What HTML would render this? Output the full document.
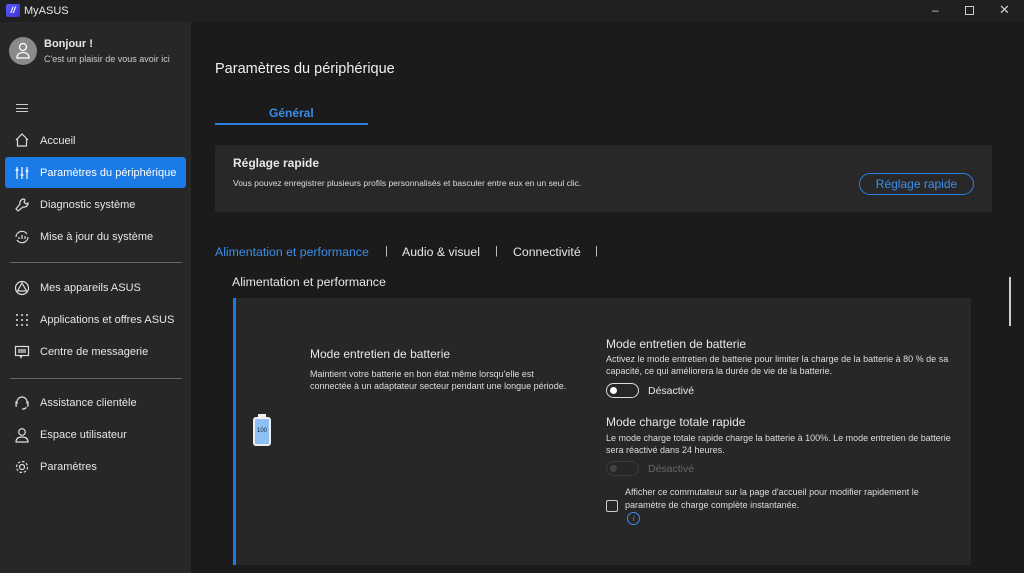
<!DOCTYPE html><html><head><meta charset="utf-8"><style>
*{margin:0;padding:0;box-sizing:border-box}
body{width:1024px;height:573px;background:#202020;font-family:"Liberation Sans",sans-serif;color:#e8e8e8;position:relative;overflow:hidden}
.a{position:absolute}
.side{left:0;top:0;width:191px;height:573px;background:#272727}
.main{left:191px;top:22px;width:833px;height:551px;background:#1b1b1b}
.nav{left:40px;font-size:11px;color:#e6e6e6}
.ic{left:14px;width:16px;height:16px}
.sep{left:10px;width:172px;height:1px;background:#666}
</style></head><body>
<div class="a side"></div>
<div class="a" style="left:0;top:0;width:1024px;height:22px;background:#202020"></div>
<div class="a" style="left:6px;top:4px;width:14px;height:13px;background:linear-gradient(135deg,#5b5bff,#3a2fd0);border-radius:2px;font-size:9px;color:#fff;font-style:italic;font-weight:bold;text-align:center;line-height:13px">//</div>
<div class="a" style="left:24px;top:5px;font-size:11px">MyASUS</div>
<div class="a" style="left:932px;top:3px;font-size:12px;color:#ccc">–</div>
<div class="a" style="left:965px;top:6px;width:9px;height:9px;border:1px solid #ccc"></div>
<div class="a" style="left:999px;top:2px;font-size:13px;color:#ccc">✕</div>
<div class="a main"></div>
<div class="a" style="left:9px;top:37px;width:28px;height:28px;border-radius:50%;background:#8a8a8a"></div>
<svg class="a" style="left:15px;top:42px" width="16" height="18" viewBox="0 0 16 18" fill="none" stroke="#fff" stroke-width="1.3"><circle cx="8" cy="5" r="3.5"/><path d="M2 16c0-4 3-5.5 6-5.5s6 1.5 6 5.5z"/></svg>
<div class="a" style="left:44px;top:38px;font-size:11px;font-weight:bold">Bonjour !</div>
<div class="a" style="left:44px;top:54px;font-size:9px;color:#ccc">C'est un plaisir de vous avoir ici</div>
<div class="a" style="left:16px;top:104px;width:12px;height:8px;border-top:1px solid #ccc;border-bottom:1px solid #ccc"></div>
<div class="a" style="left:16px;top:108px;width:12px;height:1px;background:#ccc"></div>
<svg class="a ic" style="top:132px" viewBox="0 0 16 16" fill="none" stroke="#ddd" stroke-width="1.2"><path d="M2 8L8 2l6 6M3.5 7v7h9V7"/></svg>
<div class="a nav" style="top:135px">Accueil</div>
<div class="a" style="left:5px;top:157px;width:181px;height:31px;background:#1a7ae6;border-radius:3px"></div>
<svg class="a ic" style="top:165px" viewBox="0 0 16 16" fill="none" stroke="#fff" stroke-width="1.2"><path d="M3 2v12M8 2v12M13 2v12M1.5 5h3M6.5 10h3M11.5 6h3"/></svg>
<div class="a nav" style="top:167px;color:#fff">Paramètres du périphérique</div>
<svg class="a ic" style="top:197px" viewBox="0 0 16 16" fill="none" stroke="#ddd" stroke-width="1.2"><path d="M10 2a4 4 0 0 0-4 5L2 12l2 2 5-4a4 4 0 0 0 5-4l-2 1-2-2 1-2z"/></svg>
<div class="a nav" style="top:199px">Diagnostic système</div>
<svg class="a ic" style="top:229px" viewBox="0 0 16 16" fill="none" stroke="#ddd" stroke-width="1.2"><path d="M2 8a6 6 0 0 1 11-3M14 8a6 6 0 0 1-11 3M5 10V8M8 10V6M11 10V7"/></svg>
<div class="a nav" style="top:231px">Mise à jour du système</div>
<div class="a sep" style="top:262px"></div>
<svg class="a ic" style="top:280px" viewBox="0 0 16 16" fill="none" stroke="#ddd" stroke-width="1.2"><circle cx="8" cy="8" r="6.5"/><path d="M8 3l4.5 8h-9z"/></svg>
<div class="a nav" style="top:282px">Mes appareils ASUS</div>
<svg class="a ic" style="top:312px" viewBox="0 0 16 16" fill="#ddd"><circle cx="3" cy="3" r="1"/><circle cx="8" cy="3" r="1"/><circle cx="13" cy="3" r="1"/><circle cx="3" cy="8" r="1"/><circle cx="8" cy="8" r="1"/><circle cx="13" cy="8" r="1"/><circle cx="3" cy="13" r="1"/><circle cx="8" cy="13" r="1"/><circle cx="13" cy="13" r="1"/></svg>
<div class="a nav" style="top:314px">Applications et offres ASUS</div>
<svg class="a ic" style="top:344px" viewBox="0 0 16 16" fill="none" stroke="#ddd" stroke-width="1.2"><rect x="1.5" y="2.5" width="13" height="9"/><rect x="4" y="5" width="8" height="4" fill="#999" stroke="none"/><path d="M6 11.5l1 2 1-2"/></svg>
<div class="a nav" style="top:346px">Centre de messagerie</div>
<div class="a sep" style="top:378px"></div>
<svg class="a ic" style="top:395px" viewBox="0 0 16 16" fill="none" stroke="#ddd" stroke-width="1.2"><path d="M3 9V7a5 5 0 0 1 10 0v2M3 7h-1v4h1M13 7h1v4h-1M12 12c0 2-2 2-4 2"/></svg>
<div class="a nav" style="top:397px">Assistance clientèle</div>
<svg class="a ic" style="top:427px" viewBox="0 0 16 16" fill="none" stroke="#ddd" stroke-width="1.2"><circle cx="8" cy="5" r="3.3"/><path d="M2 15c0-4 3-5 6-5s6 1 6 5z"/></svg>
<div class="a nav" style="top:429px">Espace utilisateur</div>
<svg class="a ic" style="top:459px" viewBox="0 0 16 16" fill="none" stroke="#ddd" stroke-width="1.2"><circle cx="8" cy="8" r="2.5"/><circle cx="8" cy="8" r="5.5" stroke-dasharray="2.5 1.8"/></svg>
<div class="a nav" style="top:461px">Paramètres</div>

<div class="a" style="left:215px;top:61px;font-size:14.5px;color:#f0f0f0">Paramètres du périphérique</div>
<div class="a" style="left:269px;top:106px;font-size:12px;font-weight:bold;color:#3b8ee8">Général</div>
<div class="a" style="left:215px;top:123px;width:153px;height:2px;background:#2a7fe0"></div>
<div class="a" style="left:215px;top:145px;width:777px;height:67px;background:#282828"></div>
<div class="a" style="left:233px;top:156px;font-size:12px;font-weight:bold">Réglage rapide</div>
<div class="a" style="left:233px;top:178px;font-size:8.5px;color:#ddd">Vous pouvez enregistrer plusieurs profils personnalisés et basculer entre eux en un seul clic.</div>
<div class="a" style="left:859px;top:173px;width:115px;height:22px;border:1px solid #2a7fe0;border-radius:11px;color:#3b8ee8;font-size:12px;text-align:center;line-height:20px">Réglage rapide</div>
<div class="a" style="left:215px;top:245px;font-size:12.3px;color:#3b8ee8">Alimentation et performance</div>
<div class="a" style="left:385px;top:245px;font-size:11px;color:#ccc">|</div>
<div class="a" style="left:402px;top:245px;font-size:12.3px">Audio &amp; visuel</div>
<div class="a" style="left:495px;top:245px;font-size:11px;color:#ccc">|</div>
<div class="a" style="left:513px;top:245px;font-size:12.3px">Connectivité</div>
<div class="a" style="left:595px;top:245px;font-size:11px;color:#ccc">|</div>
<div class="a" style="left:232px;top:275px;font-size:12.3px">Alimentation et performance</div>
<div class="a" style="left:1009px;top:277px;width:2px;height:49px;background:#ccc"></div>
<div class="a" style="left:233px;top:298px;width:738px;height:267px;background:#272727;border-left:3px solid #1a7ae6"></div>
<div class="a" style="left:253px;top:417px;width:18px;height:29px;border:2px solid #eee;border-radius:3px;background:#8ec0f5;font-size:6px;color:#123;text-align:center;line-height:25px">100</div>
<div class="a" style="left:258px;top:414px;width:8px;height:3px;background:#eee"></div>
<div class="a" style="left:310px;top:347px;font-size:12px">Mode entretien de batterie</div>
<div class="a" style="left:310px;top:368px;font-size:9px;line-height:12px;color:#ddd;width:265px">Maintient votre batterie en bon état même lorsqu'elle est connectée à un adaptateur secteur pendant une longue période.</div>
<div class="a" style="left:606px;top:337px;font-size:12px">Mode entretien de batterie</div>
<div class="a" style="left:606px;top:353px;font-size:9px;line-height:12px;color:#ddd;width:360px">Activez le mode entretien de batterie pour limiter la charge de la batterie à 80 % de sa capacité, ce qui améliorera la durée de vie de la batterie.</div>
<div class="a" style="left:606px;top:383px;width:33px;height:15px;border:1px solid #ddd;border-radius:8px"></div>
<div class="a" style="left:610px;top:387px;width:7px;height:7px;border-radius:50%;background:#fff"></div>
<div class="a" style="left:648px;top:385px;font-size:10.5px">Désactivé</div>
<div class="a" style="left:606px;top:415px;font-size:12px">Mode charge totale rapide</div>
<div class="a" style="left:606px;top:432px;font-size:9px;line-height:12px;color:#ddd;width:345px">Le mode charge totale rapide charge la batterie à 100%. Le mode entretien de batterie sera réactivé dans 24 heures.</div>
<div class="a" style="left:606px;top:461px;width:33px;height:15px;border:1px solid #3a3a3a;border-radius:8px"></div>
<div class="a" style="left:610px;top:465px;width:7px;height:7px;border-radius:50%;background:#444"></div>
<div class="a" style="left:648px;top:463px;font-size:10.5px;color:#666">Désactivé</div>
<div class="a" style="left:606px;top:500px;width:12px;height:12px;border:1px solid #ccc;border-radius:2px"></div>
<div class="a" style="left:625px;top:486px;font-size:9px;line-height:13px;color:#ddd;width:315px">Afficher ce commutateur sur la page d'accueil pour modifier rapidement le paramètre de charge complète instantanée.</div>
<div class="a" style="left:627px;top:512px;width:13px;height:13px;border:1px solid #3b8ee8;border-radius:50%;font-size:8px;color:#3b8ee8;text-align:center;line-height:11px;font-style:italic">i</div>
</body></html>
